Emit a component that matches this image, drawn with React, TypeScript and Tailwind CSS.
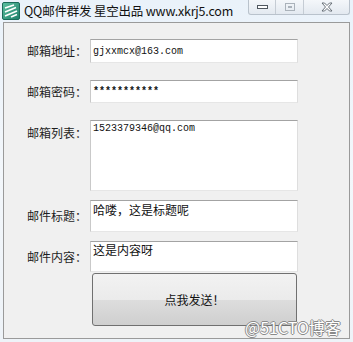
import React from "react";

const cjk = { fontFamily: '"Noto Sans CJK SC", "Microsoft YaHei", sans-serif' };
const mono = { fontFamily: '"Liberation Mono", "Noto Sans CJK SC", monospace' };

const boxCls =
  "bg-white border border-t-[#a3a3a3] border-l-[#c9c9c9] border-r-[#dedede] border-b-[#e6e6e6]";

function AppIcon() {
  return (
    <svg width="18" height="18" viewBox="0 0 18 18">
      <defs>
        <linearGradient id="ig" x1="0" y1="0" x2="1" y2="1">
          <stop offset="0" stopColor="#5cc0a0" />
          <stop offset="1" stopColor="#1f7f6a" />
        </linearGradient>
      </defs>
      <rect x="0.5" y="0.5" width="17" height="17" rx="1.5" fill="url(#ig)" stroke="#1b6b5a" />
      <path d="M3 6 L12 3 M3 10 L14 5.5 M3 14 L15 9" stroke="#fff" strokeWidth="1.6" fill="none" />
      <path d="M9 15 L15 12.5" stroke="#fff" strokeWidth="1.6" fill="none" />
    </svg>
  );
}

function Row({
  label,
  top = false,
  labelPad = 0,
  className = "",
  children,
}: {
  label: string;
  top?: boolean;
  labelPad?: number;
  className?: string;
  children: React.ReactNode;
}) {
  return (
    <div className={`flex ${top ? "items-start" : "items-center"} ${className}`}>
      <div
        className="w-[63px] shrink-0 text-[12px] leading-[14px] text-[#1e1e1e]"
        style={{ ...cjk, paddingTop: labelPad }}
      >
        {label}
      </div>
      {children}
    </div>
  );
}

export default function App() {
  return (
    <div className="relative w-[353px] h-[342px] overflow-hidden bg-gradient-to-b from-[#eaf2fa] via-[#f3f7fb] to-[#eef3f8]">
      {/* Title bar */}
      <div className="h-[22px] flex items-center pl-[2px]">
        <AppIcon />
        <span className="ml-[4px] text-[12.5px] leading-[16px] tracking-[-0.2px] text-[#111]" style={cjk}>
          QQ邮件群发 星空出品 www.xkrj5.com
        </span>
      </div>

      {/* Caption buttons */}
      <div className="absolute top-0 left-[248px] flex h-[15px] border border-t-0 border-[#b9c2cc] rounded-b-[3px] bg-gradient-to-b from-[#f4f7fa] to-[#e3e9f0]">
        <div className="w-[27px] flex items-center justify-center border-r border-[#c5ccd4]">
          <div className="w-[11px] h-[4px] border border-[#505860] bg-white" />
        </div>
        <div className="w-[28px] flex items-center justify-center border-r border-[#c5ccd4]">
          <div className="w-[10px] h-[8px] border border-[#aab2ba] flex items-center justify-center">
            <div className="w-[4px] h-[2px] border border-[#aab2ba]" />
          </div>
        </div>
        <div className="w-[45px] flex items-center justify-center">
          <svg width="12" height="10" viewBox="0 0 12 10">
            <path
              d="M1 1 H3.5 L6 3.5 L8.5 1 H11 L7.5 5 L11 9 H8.5 L6 6.5 L3.5 9 H1 L4.5 5 Z"
              fill="#fff"
              stroke="#5a636c"
              strokeWidth="0.9"
            />
          </svg>
        </div>
      </div>

      {/* Client area */}
      <div className="mx-[3px] h-[317px] border border-[#9a9a9a] bg-[#f0f0f0] pl-[23px] pt-[16px] flex flex-col">
        <Row label="邮箱地址：">
          <div className={`${boxCls} w-[208px] h-[24px] flex items-center pl-[2px] text-[10px] text-[#111]`} style={mono}>
            gjxxmcx@163.com
          </div>
        </Row>
        <Row label="邮箱密码：" className="mt-[17px]">
          <div className={`${boxCls} w-[208px] h-[23px] flex items-center pl-[2px] text-[10px] font-bold text-[#111]`} style={mono}>
            ***********
          </div>
        </Row>
        <Row label="邮箱列表：" top labelPad={6} className="mt-[17px]">
          <div className={`${boxCls} w-[208px] h-[71px] pl-[2px] pt-[1px] text-[10px] leading-[14px] text-[#111]`} style={mono}>
            1523379346@qq.com
          </div>
        </Row>
        <Row label="邮件标题：" className="mt-[9px]">
          <div className={`${boxCls} w-[208px] h-[32px] pl-[2px] pt-[1px] text-[12px] leading-[15px] text-[#111]`} style={cjk}>
            哈喽，这是标题呢
          </div>
        </Row>
        <Row label="邮件内容：" className="mt-[9px]">
          <div className={`${boxCls} w-[208px] h-[31px] pl-[2px] text-[12px] leading-[15px] text-[#111]`} style={cjk}>
            这是内容呀
          </div>
        </Row>
        <div className="mt-[1px] pl-[65px]">
          <button
            className="w-[205px] h-[53px] rounded-[3px] border border-[#707070] bg-[linear-gradient(to_bottom,#f2f2f2_0%,#ebebeb_50%,#dddddd_51%,#cfcfcf_100%)] text-[12px] text-[#111] flex items-center justify-center"
            style={cjk}
          >
            点我发送！
          </button>
        </div>
      </div>

      {/* Watermark */}
      <div
        className="absolute left-[245px] top-[317px] text-[16px] leading-[20px] text-white"
        style={{
          ...cjk,
          textShadow:
            "1px 0 0 #8a8a8a, -1px 0 0 #8a8a8a, 0 1px 0 #8a8a8a, 0 -1px 0 #8a8a8a",
        }}
      >
        @51CTO博客
      </div>
    </div>
  );
}
